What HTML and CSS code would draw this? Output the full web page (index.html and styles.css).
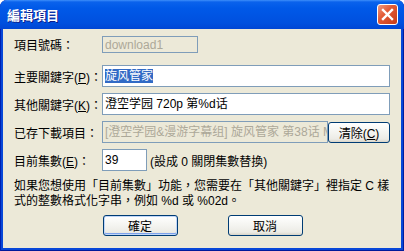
FILE: index.html
```html
<!DOCTYPE html>
<html lang="zh-Hant">
<head>
  <meta charset="UTF-8">
  <title>編輯項目</title>
  <link rel="stylesheet" href="styles.css">
</head>
<body>
  <div class="window">
    <div class="titlebar">
      <span class="title">編輯項目</span>
      <span class="close">
        <svg width="13" height="13" viewBox="0 0 13 13"><path d="M2 2 L11 11 M11 2 L2 11" stroke="#fff" stroke-width="2.4" stroke-linecap="square"/></svg>
      </span>
    </div>
    <div class="client">
      <div class="form">
        <div class="row row-id">
          <span class="label">項目號碼：</span>
          <div class="edit off w-id">download1</div>
        </div>
        <div class="row">
          <span class="label">主要關鍵字(<u>P</u>)：</span>
          <div class="edit w-full"><span class="sel">旋风管家</span></div>
        </div>
        <div class="row">
          <span class="label">其他關鍵字(<u>K</u>)：</span>
          <div class="edit w-full">澄空学园 720p 第%d话</div>
        </div>
        <div class="row">
          <span class="label">已存下載項目：</span>
          <div class="edit off w-saved">[澄空学园&amp;漫游字幕组] 旋风管家 第38话 MP4 720p</div>
          <button class="btn btn-clear" type="button">清除(<u>C</u>)</button>
        </div>
        <div class="row">
          <span class="label">目前集數(<u>E</u>)：</span>
          <div class="edit w-num">39</div>
          <span class="note">(設成 0 關閉集數替換)</span>
        </div>
      </div>
      <p class="hint">如果您想使用「目前集數」功能，您需要在「其他關鍵字」裡指定 C 樣<br>式的整數格式化字串，例如 %d 或 %02d。</p>
      <div class="actions">
        <button class="btn btn-default" type="button">確定</button>
        <button class="btn" type="button">取消</button>
      </div>
    </div>
  </div>
</body>
</html>
```

FILE: styles.css
```css
body {
  margin: 0;
  background: #fff;
  font-family: "Liberation Sans", "Noto Sans CJK TC", sans-serif;
  font-size: 12px;
  color: #000;
}

.window {
  width: 404px;
  height: 251px;
  display: flex;
  flex-direction: column;
  background: #0847d8;
  border-radius: 7px 7px 0 0;
  overflow: hidden;
  box-shadow: inset 1px 0 #0020b0, inset -1px 0 #001c9e, inset 0 -1px #001a9a;
}

.titlebar {
  height: 29px;
  flex: none;
  display: flex;
  align-items: center;
  justify-content: space-between;
  padding: 0 6px 0 7px;
  background: linear-gradient(#3d8ffa 0, #0a62ec 2px, #0059e8 8px, #0055e4 50%, #0050de 80%, #0046d4 100%);
}

.title {
  color: #fff;
  font-family: "Noto Sans CJK TC", sans-serif;
  font-weight: bold;
  font-size: 13px;
  text-shadow: 1px 1px 0 #0f1e89;
}

.close {
  width: 21px;
  height: 21px;
  box-sizing: border-box;
  border: 1px solid #fff;
  border-radius: 3px;
  background: linear-gradient(135deg, #f09a80, #e35b37 40%, #c63b17);
  display: flex;
  align-items: center;
  justify-content: center;
}

.client {
  flex: 1;
  margin: 0 3px 3px;
  background: #ece9d8;
  padding: 7px 10px 0 11px;
  display: flex;
  flex-direction: column;
}

.form {
  display: flex;
  flex-direction: column;
  gap: 6px;
}

.row {
  display: flex;
  align-items: center;
  height: 22px;
}

.row-id {
  height: 17px;
  margin-bottom: 6px;
}

.label {
  width: 88px;
  flex: none;
  white-space: nowrap;
}

.edit {
  box-sizing: border-box;
  height: 100%;
  flex: none;
  border: 1px solid #7f9db9;
  background: #fff;
  padding: 0 2px;
  display: flex;
  align-items: center;
  white-space: nowrap;
  overflow: hidden;
  line-height: 14px;
}

.edit.off {
  background: transparent;
  color: #aca899;
}

.w-id { width: 96px; }
.w-full { width: 288px; }
.w-saved { width: 226px; }
.w-num { width: 45px; }

.sel {
  display: inline-block;
  background: #316ac5;
  color: #fff;
  line-height: 14px;
}

.note {
  margin-left: 3px;
  white-space: nowrap;
}

.btn {
  font: inherit;
  color: #000;
  height: 21px;
  padding: 0;
  border: 1px solid #003c74;
  border-radius: 3px;
  background: linear-gradient(#ffffff, #f4f4f0 50%, #ecebe5 85%, #d8d4c8);
  width: 75px;
}

.btn-clear {
  width: 62px;
}

.btn-default {
  box-shadow: inset 0 0 0 1px #c0d6f8, inset 0 -1px 0 1px #7da2ec;
}

.hint {
  margin: 8px 0 0;
  line-height: 15px;
  white-space: nowrap;
}

.actions {
  margin-top: 6px;
  display: flex;
  justify-content: center;
  gap: 50px;
}
```
